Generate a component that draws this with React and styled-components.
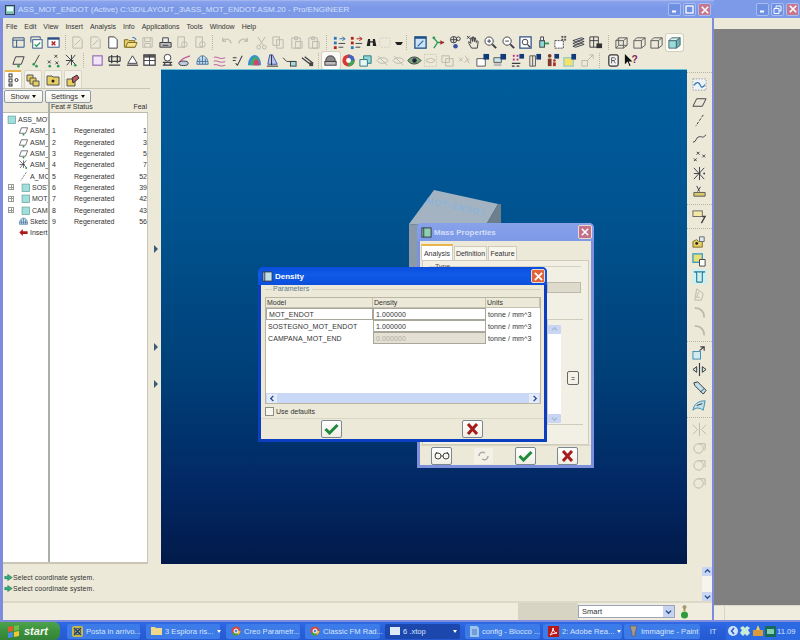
import React from "react";
import styled, { createGlobalStyle } from "styled-components";

const Global = createGlobalStyle`
  html, body { margin: 0; padding: 0; background: #245edb; }
  * { box-sizing: border-box; }
  body { font-family: "Liberation Sans", Arial, sans-serif; font-size: 7px; color: #222; }
`;

const CREAM = "#ece9d8";

const Desktop = styled.div`
  position: relative;
  width: 800px;
  height: 640px;
  overflow: hidden;
  display: grid;
  grid-template-columns: 714px 86px;
  grid-template-rows: 622px 18px;
`;

/* ---------- main window ---------- */
const Window = styled.div`
  display: flex;
  flex-direction: column;
  background: ${CREAM};
  border: solid #7f8bdc;
  border-width: 0 2px 2px 3px;
  min-width: 0;
`;
const TitleBar = styled.div`
  height: 18px;
  margin-left: -3px;
  margin-right: -2px;
  padding: 0 3px 0 5px;
  display: flex;
  align-items: center;
  gap: 2px;
  color: #d5e0fa;
  font-size: 8px;
  background: linear-gradient(#8aa4ec, #7b98e8 40%, #7d9ae8);
  border-top: 1px solid #a2b4f0;
`;
const TitleText = styled.span`
  flex: 1;
  white-space: nowrap;
  margin-left: 1px;
`;
const CapBtn = styled.span`
  width: 13px;
  height: 13px;
  border-radius: 2px;
  border: 1px solid #a8bcf0;
  background: ${(p) => (p.$close ? "#c7768f" : "#6f90e2")};
  display: flex;
  align-items: center;
  justify-content: center;
  svg { display: block; }
`;
const MenuBar = styled.div`
  height: 16px;
  display: flex;
  align-items: center;
  gap: 7px;
  padding-left: 3px;
  font-size: 7px;
  color: #333;
`;
const Tools = styled.div`
  height: 35px;
  display: flex;
  flex-direction: column;
  flex: none;
`;
const ToolRow = styled.div`
  height: 17.5px;
  display: flex;
  align-items: center;
  padding-left: ${(p) => p.$pad}px;
`;
const Slot = styled.span`
  flex: none;
  width: ${(p) => p.$w || 17.5}px;
  height: 17px;
  display: flex;
  align-items: center;
  justify-content: center;
  background: ${(p) => (p.$on ? "#fbfaf4" : "transparent")};
  border-radius: 2px;
  box-shadow: ${(p) => (p.$on ? "0 0 0 1px #d3d0c0" : "none")};
  svg { display: block; opacity: ${(p) => (p.$faded ? 0.28 : 1)}; }
`;
const Sep = styled.span`
  flex: none;
  width: ${(p) => p.$w}px;
  height: 15px;
  display: flex;
  justify-content: center;
  &::after { content: ""; width: 1px; height: 100%; border-left: 1px dotted #b5b2a2; }
`;
const Caret = styled.span`
  flex: none;
  width: 8px;
  height: 3px;
  border: 2px solid transparent;
  border-top: 3px solid #222;
  border-left-width: 2px;
  margin-top: 3px;
  background: none;
  transform: translateX(1px);
`;

const Body = styled.div`
  height: 495px;
  display: flex;
  flex: none;
`;

/* left navigator */
const Panel = styled.div`
  width: 147px;
  display: flex;
  flex-direction: column;
`;
const NavTabs = styled.div`
  height: 19px;
  display: flex;
  gap: 2px;
  padding: 1px 0 0 1px;
`;
const NavTab = styled.span`
  width: 18px;
  height: 18px;
  background: ${(p) => (p.$on ? "#fff" : "#f4f2e8")};
  border: 1px solid #d8d5c6;
  border-bottom: 0;
  border-top: ${(p) => (p.$on ? "2px solid #e9b54a" : "1px solid #d8d5c6")};
  border-radius: 2px 2px 0 0;
  display: flex;
  align-items: center;
  justify-content: center;
`;
const ShowRow = styled.div`
  height: 15px;
  display: flex;
  gap: 2px;
  padding-left: 1px;
  border-top: 1px solid #c9c6b6;
  align-items: center;
`;
const DropBtn = styled.span`
  width: ${(p) => p.$w}px;
  height: 13px;
  border: 1px solid #8f9aa8;
  border-radius: 2px;
  background: linear-gradient(#fff, #f1efe6);
  display: flex;
  align-items: center;
  justify-content: center;
  gap: 3px;
  font-size: 7.5px;
  color: #333;
  &::after { content: ""; border: 2.5px solid transparent; border-top: 3px solid #111; margin-top: 3px; }
`;
const TreeWrap = styled.div`
  flex: 1;
  display: grid;
  grid-template-columns: 47px 98px;
  grid-template-rows: 10px 1fr;
  margin-right: 2px;
  background: #fff;
  border-bottom: 2px solid #c9c6b6;
  border-right: 1px solid #c9c6b6;
  min-height: 0;
`;
const HeadCell = styled.div`
  background: ${CREAM};
  border-bottom: 1px solid #bdbaaa;
  font-size: 7px;
  display: flex;
  color: #333;
  padding: 0 1px;
  justify-content: space-between;
`;
const HeadBlank = styled.div`
  background: ${CREAM};
  border-bottom: 1px solid #bdbaaa;
  border-right: 2px solid #a9b0a8;
`;
const TreeCol = styled.div`
  border-right: 2px solid #a9b0a8;
  padding-top: 1px;
  overflow: hidden;
`;
const TreeRow = styled.div`
  height: 11.3px;
  display: flex;
  align-items: center;
  gap: 1px;
  padding-left: ${(p) => p.$in}px;
  white-space: nowrap;
  font-size: 7px;
  color: #333;
  svg { flex: none; }
`;
const Plus = styled.span`
  flex: none;
  width: 6px;
  height: 6px;
  margin-right: 5px;
  border: 1px solid #999;
  background: linear-gradient(#999, #999) center/4px 1px no-repeat, linear-gradient(#999, #999) center/1px 4px no-repeat;
`;
const FeatCol = styled.div`
  padding-top: 12.3px;
`;
const FeatRow = styled.div`
  height: 11.3px;
  display: grid;
  grid-template-columns: 22px 1fr 16px;
  align-items: center;
  padding-left: 2px;
  font-size: 7px;
  color: #333;
  & > :last-child { text-align: right; padding-right: 1px; overflow: hidden; }
`;
const Sash = styled.div`
  width: 11px;
  display: flex;
  flex-direction: column;
  align-items: center;
  padding-top: 176px;
`;
const SashMark = styled.svg`
  flex: none;
  margin-top: ${(p) => p.$mt}px;
`;

/* graphics area */
const Viewport = styled.div`
  position: relative;
  width: 526px;
  background: linear-gradient(#005c9b 0%, #00538f 30%, #003f78 62%, #022763 85%, #021a4a 100%);
  border-top: 1px solid #6cc0d8;
`;
const Cube = styled.svg`
  position: absolute;
  left: 240px;
  top: 116px;
`;
const RightBar = styled.div`
  width: 25px;
  display: flex;
  flex-direction: column;
  align-items: center;
  ${Slot} { height: 17.8px; }
`;
const RightSep = styled.span`
  width: 100%;
  flex: none;
  height: ${(p) => p.$h}px;
  display: flex;
  align-items: center;
  &::after { content: ""; width: 100%; border-top: 1px dotted #b5b2a2; }
`;

/* bottom area */
const Messages = styled.div`
  height: 39px;
  flex: none;
  display: flex;
  justify-content: space-between;
  padding: 8px 0 0 1px;
  border-bottom: 2px solid #dcd9c8;
`;
const MsgList = styled.div`
  display: flex;
  flex-direction: column;
  gap: 1px;
`;
const Msg = styled.div`
  height: 10px;
  display: flex;
  align-items: center;
  font-size: 6.9px;
  color: #333;
  letter-spacing: 0.1px;
`;
const MsgScroll = styled.div`
  width: 10px;
  margin: -5px 0 0 0;
  background: #f5f4ee;
  display: flex;
  flex-direction: column;
  justify-content: space-between;
`;
const ScrollBtn = styled.span`
  height: 9px;
  background: #c8d6f4;
  display: flex;
  align-items: center;
  justify-content: center;
  border-radius: 1px;
`;
const StatusBar = styled.div`
  flex: 1;
  display: flex;
  align-items: center;
  background: #f0edde;
`;
const StatusGap = styled.div`
  width: ${(p) => p.$w}px;
  height: 100%;
  flex: none;
  background: ${(p) => p.$bg || "transparent"};
  display: flex;
  align-items: center;
  justify-content: center;
`;
const SelectBox = styled.div`
  width: 97px;
  height: 13px;
  flex: none;
  border: 1px solid #9aa3b8;
  background: #fff;
  display: flex;
  align-items: center;
  justify-content: space-between;
  padding-left: 3px;
  font-size: 7.5px;
  color: #333;
`;
const SelectArrow = styled.span`
  width: 11px;
  height: 11px;
  background: #c6d4f2;
  display: flex;
  align-items: center;
  justify-content: center;
`;

/* window behind */
const BackWindow = styled.div`
  display: flex;
  flex-direction: column;
  background: ${CREAM};
  border-bottom: 2px solid #7f8bdc;
`;
const BackTitle = styled.div`
  height: 18px;
  display: flex;
  justify-content: flex-end;
  align-items: center;
  gap: 2px;
  padding-right: 1px;
  background: #7d9ae8;
`;
const BackMenu = styled.div`
  height: 11px;
`;
const BackGray = styled.div`
  flex: 1;
  background: #808080;
`;
const BackFoot = styled.div`
  height: 15px;
  border-top: 1px solid #dcd9c8;
  background: #f0edde linear-gradient(#d8d5c4, #d8d5c4) 10px 0/1px 100% no-repeat;
`;

/* taskbar */
const Taskbar = styled.div`
  grid-column: 1 / 3;
  display: flex;
  align-items: center;
  background: linear-gradient(#2f6ae4, #2a62dc 30%, #245ad2);
`;
const Start = styled.div`
  width: 60px;
  height: 18px;
  flex: none;
  margin-right: 7px;
  display: flex;
  align-items: center;
  gap: 3px;
  padding-left: 7px;
  border-radius: 0 6px 6px 0;
  background: linear-gradient(#4da34c, #3c913f 50%, #348236);
  color: #f4f8ee;
  font: italic bold 11px "Liberation Sans", sans-serif;
`;
const TaskBtn = styled.div`
  width: ${(p) => p.$w}px;
  height: 15px;
  flex: none;
  margin-right: ${(p) => p.$gap}px;
  display: flex;
  align-items: center;
  gap: 3px;
  padding-left: 5px;
  border-radius: 2px;
  background: ${(p) => (p.$on ? "#1c48ae" : "#3d7be8")};
  color: #d9e5fb;
  font-size: 7.6px;
  white-space: nowrap;
  position: relative;
  svg { flex: none; }
`;
const TaskCaret = styled.span`
  margin-left: auto;
  margin-right: 3px;
  border: 2px solid transparent;
  border-top: 3px solid #fff;
  margin-top: 3px;
`;
const Lang = styled.span`
  width: 26px;
  flex: none;
  text-align: center;
  color: #d9e5fb;
  font-size: 7.6px;
`;
const Tray = styled.div`
  flex: 1;
  height: 100%;
  display: flex;
  align-items: center;
  gap: 1px;
  padding-left: 2px;
  background: #2b6ae2;
  color: #d9e5fb;
  font-size: 7.6px;
`;
const Clock = styled.span`
  margin-left: auto;
  margin-right: 5px;
`;

/* dialogs */
const Dialog = styled.div`
  position: absolute;
  left: ${(p) => p.$x}px;
  top: ${(p) => p.$y}px;
  width: ${(p) => p.$w}px;
  height: ${(p) => p.$h}px;
  background: ${CREAM};
  border: 3px solid ${(p) => p.$edge};
  border-top: 0;
  border-radius: 5px 5px 0 0;
  display: flex;
  flex-direction: column;
`;
const DlgTitle = styled.div`
  flex: none;
  height: 18px;
  margin: 0 -3px;
  padding: 0 2px 0 4px;
  border-radius: 5px 5px 0 0;
  display: flex;
  align-items: center;
  gap: 2px;
  background: ${(p) => p.$bg};
  color: ${(p) => p.$fg};
  font-size: 8px;
  font-weight: bold;
`;
const DlgName = styled.span`
  flex: 1;
`;
const DlgClose = styled.span`
  width: 14px;
  height: 14px;
  border: 1px solid #f1d9c8;
  border-radius: 2px;
  background: ${(p) => p.$bg};
  display: flex;
  align-items: center;
  justify-content: center;
`;
const Fieldset = styled.div`
  flex: none;
  margin: 4px 4px 0;
  height: 6px;
  border-top: 1px solid #d4d1c0;
  font-size: 7px;
  color: #5d7a90;
  line-height: 8px;
  padding-left: 7px;
`;
const Legend = styled.span`
  position: relative;
  top: -5px;
  background: ${CREAM};
  padding: 0 3px 0 1px;
`;
const GridBox = styled.div`
  flex: none;
  margin: 2px 3px 0 4px;
  height: 107px;
  background: #fff;
  border: 1px solid #b8b5a5;
  display: flex;
  flex-direction: column;
`;
const GridRows = styled.div`
  flex: 1;
  display: grid;
  grid-template-columns: 107px 113px 1fr;
  grid-template-rows: 10px;
  grid-auto-rows: 12px;
  font-size: 7px;
  color: #333;
  align-content: start;
`;
const GridHead = styled.div`
  height: 10px;
  background: ${CREAM};
  border-right: 1px solid #c5c2b2;
  border-bottom: 1px solid #c5c2b2;
  padding-left: 1px;
  line-height: 9px;
`;
const Cell = styled.div`
  display: flex;
  align-items: center;
  padding-left: 2px;
  letter-spacing: 0.1px;
  white-space: nowrap;
  height: 12px;
  border: ${(p) => (p.$box ? "1px solid #a9a69a" : "0")};
  background: ${(p) => (p.$off ? "#e4e1d4" : "#fff")};
  color: ${(p) => (p.$off ? "#b0aea4" : "#333")};
`;
const HScroll = styled.div`
  flex: none;
  height: 10px;
  background: #c9d8f6;
  display: flex;
  justify-content: space-between;
  align-items: center;
  padding: 0 1px;
`;
const HArrow = styled.span`
  width: 10px;
  height: 9px;
  background: #e4ecfb;
  display: flex;
  align-items: center;
  justify-content: center;
`;
const CheckRow = styled.label`
  flex: none;
  height: 14px;
  margin-left: 4px;
  display: flex;
  align-items: center;
  gap: 2px;
  font-size: 7px;
  color: #333;
`;
const CheckBox = styled.span`
  width: 9px;
  height: 9px;
  background: #f7f6ef;
  border: 1px solid #8d8d84;
`;
const DlgFoot = styled.div`
  flex: 1;
  display: flex;
  align-items: center;
  justify-content: ${(p) => p.$just};
  border-top: 1px solid #d9d6c5;
  padding: ${(p) => p.$pad};
  gap: ${(p) => p.$gap || 0}px;
`;
const PushBtn = styled.span`
  width: 21px;
  height: 18px;
  flex: none;
  border: 1px solid ${(p) => (p.$flat ? "#ece9d8" : "#7d8790")};
  border-radius: 2px;
  background: ${(p) => (p.$flat ? "#f3f1e6" : "linear-gradient(#fff, #f0eee4)")};
  display: flex;
  align-items: center;
  justify-content: center;
`;
const MassTabs = styled.div`
  flex: none;
  display: flex;
  padding-left: 1px;
  height: 16px;
  margin-top: 3px;
  align-items: flex-end;
  gap: 1px;
`;
const MassTab = styled.span`
  height: ${(p) => (p.$on ? 16 : 14)}px;
  width: ${(p) => p.$w}px;
  background: ${(p) => (p.$on ? "#fff" : "#f7f5ec")};
  border: 1px solid #cfccbc;
  border-bottom: 0;
  border-top: ${(p) => (p.$on ? "2px solid #e9b54a" : "1px solid #cfccbc")};
  display: flex;
  align-items: center;
  justify-content: center;
  font-size: 7px;
  color: #333;
`;
const MassPanel = styled.div`
  flex: none;
  height: 185px;
  margin: 0 2px;
  border: 1px solid #cfccbc;
  padding: 5px 7px 0 6px;
  display: flex;
  flex-direction: column;
  background: #f2f0e4;
`;
const TypeLabel = styled.div`
  font-size: 7px;
  color: #555;
  padding-left: 6px;
  height: 16px;
  border-top: 1px solid #d4d1c0;
  line-height: 0;
`;
const TypeField = styled.div`
  height: 11px;
  margin-left: 118px;
  background: #dedbcd;
  border: 1px solid #bdbaa9;
`;
const ResultBox = styled.div`
  margin-top: 26px;
  height: 106px;
  margin-left: 118px;
  display: flex;
  gap: 6px;
  border: 1px solid #cfccbc;
  border-right: 0;
  padding: 5px 0 0;
  margin-right: -2px;
`;
const ResultList = styled.div`
  width: 13px;
  height: 98px;
  background: #fff;
  display: flex;
  flex-direction: column;
  justify-content: space-between;
`;
const SideCalc = styled.span`
  width: 12px;
  height: 14px;
  margin-top: 46px;
  border: 1px solid #666;
  border-radius: 2px;
  background: #f4f2e8;
  display: flex;
  align-items: center;
  justify-content: center;
  font-size: 7px;
`;

/* ---------- icons ---------- */
const K = "#3c3c44";
const B = "#2f74b8";
const Y = "#e7cf62";
const G = "#2a9a55";
const R = "#b32222";
const C = "#8fd6d8";

const lines = (d, c = K, w = 1) => <path d={d} fill="none" stroke={c} strokeWidth={w} />;
const dots = (pts, c = G) => pts.map(([x, y], i) => <circle key={i} cx={x} cy={y} r="1.4" fill={c} />);

const ICONS = {
  win: <>{lines("M2 3h12v10H2zM2 5.5h12M6 5.5V13", "#2b4f84")}</>,
  winCheck: <><rect x="4" y="5" width="10" height="9" fill="#fff" stroke="#2b4f84" />{lines("M2 8V2h10v2", "#2b4f84")}{lines("M6 10l2 2 4-4", G, 1.4)}</>,
  winX: <><rect x="2" y="3" width="12" height="10" fill="#fff" stroke="#2b4f84" /><path d="M2 3h12v2H2z" fill="#2b4f84" />{lines("M6 7l4 4M10 7l-4 4", R, 1.5)}</>,
  pencilDoc: <>{lines("M3 2h7l3 3v9H3zM5 11l6-6")}</>,
  page: <><path d="M4 2h6l3 3v9H4z" fill="#fff" stroke={K} /></>,
  open: <><path d="M1.5 13V5h4l1 1h6v7z" fill={Y} stroke="#7c6a25" /><path d="M3 13l2-5h10l-2 5z" fill="#f4e08a" stroke="#7c6a25" />{lines("M10 3c2-1 3 0 4 2", B, 1.2)}</>,
  save: <>{lines("M3 3h10v10H3zM5 3v4h6V3M5 13v-4h6v4")}</>,
  print: <><path d="M2 8h12v5H2z" fill="#bbb" stroke={K} /><path d="M5 3h6v5H5z" fill="#eee" stroke={K} />{lines("M5 11h6")}</>,
  magDoc: <>{lines("M3 2h7v11H3z")}<circle cx="10" cy="10" r="3" fill="none" stroke={K} /></>,
  undo: <>{lines("M4 6c3-3 8-2 9 3M4 3v3.5h3.5", K, 1.2)}</>,
  redo: <>{lines("M12 6C9 3 4 4 3 9M12 3v3.5H8.5", K, 1.2)}</>,
  cut: <>{lines("M4 2l6 9M12 2L6 11")}<circle cx="5" cy="13" r="2" fill="none" stroke={K} /><circle cx="11" cy="13" r="2" fill="none" stroke={K} /></>,
  copy: <>{lines("M2 2h7v9H2zM6 5h7v9H6z")}</>,
  paste: <>{lines("M3 3h9v11H3zM6 2h3v3H6zM7 7h7v7H7z")}</>,
  relA: <><g fill={B}><rect x="2" y="2" width="3" height="3" /><rect x="2" y="7" width="3" height="3" /></g><rect x="2" y="12" width="3" height="3" fill={R} /><path d="M8 4h6M11 2l3 2-3 2" stroke={B} fill="none" />{lines("M7 9h7M7 13h5")}</>,
  relB: <><g fill={R}><rect x="2" y="2" width="3" height="3" /><rect x="2" y="7" width="3" height="3" /></g><rect x="2" y="12" width="3" height="3" fill={B} /><path d="M8 4h6M11 2l3 2-3 2" stroke={R} fill="none" />{lines("M7 9h7M7 13h5")}</>,
  binoc: <path d="M3 3h3v3h4V3h3l2 10h-5V8H6v5H1z" fill="#222" />,
  dashBox: <rect x="2" y="3" width="11" height="10" rx="2" fill="none" stroke="#888" strokeDasharray="2 1.5" />,
  repaint: <><rect x="2" y="2" width="12" height="12" fill="#cfe2f4" stroke="#1d4f86" strokeWidth="1.4" /><path d="M2 2h12v2H2z" fill="#1d4f86" />{lines("M5 12l6-6", B, 1.4)}</>,
  spin: <>{lines("M3 3l4 5-4 6M7 8h7", "#2a9a55", 1.4)}<path d="M10 5.5l4 2.5-4 2.5z" fill={R} /><circle cx="3" cy="3" r="1.5" fill={G} /></>,
  orient: <><circle cx="6" cy="5" r="3.4" fill="none" stroke={K} /><circle cx="11" cy="4" r="2" fill="none" stroke={K} /><circle cx="8" cy="12" r="2.4" fill="#3a50a8" />{lines("M3 5h6M6 2v6")}</>,
  hand: <>{lines("M6 14L3 9V7l2 2V3l1 0 1 4V2l1 0 1 5V3l1 0 1 5 1-2 1 1-1 7z")}{lines("M1 1l3 3M4 1L1 4", K)}</>,
  zoomIn: <><circle cx="6.5" cy="6.5" r="4.4" fill="#fff" stroke={K} />{lines("M10 10l4 4", K, 2)}{lines("M4.5 6.5h4M6.5 4.5v4", K)}</>,
  zoomOut: <><circle cx="6.5" cy="6.5" r="4.4" fill="#fff" stroke={K} />{lines("M10 10l4 4", K, 2)}{lines("M4.5 6.5h4", K)}</>,
  zoomFit: <><rect x="2" y="2" width="12" height="12" fill="#fff" stroke="#2b4f84" strokeWidth="1.3" /><circle cx="7.5" cy="7.5" r="3" fill="none" stroke={K} />{lines("M10 10l3 3", K, 1.5)}</>,
  model: <><rect x="4" y="6" width="5" height="7" fill={C} stroke={K} /><path d="M9 9h5" stroke={G} strokeWidth="2" /><path d="M5 2h3v4H5z" fill="#fff" stroke={K} /></>,
  dotsBox: <><path d="M2 6h9v8H2z" fill="#fff" stroke={K} strokeDasharray="2 1" /><g fill="#555"><rect x="9" y="1" width="2" height="2" /><rect x="12" y="1" width="2" height="2" /><rect x="9" y="4" width="2" height="2" /><rect x="12" y="4" width="2" height="2" /></g></>,
  layers: <><path d="M2 6l9-3 3 1-9 3z" fill="#dbe7f2" stroke={K} /><path d="M2 9l9-3 3 1-9 3zM2 12l9-3 3 1-9 3z" fill="none" stroke={K} /></>,
  savedV: <>{lines("M2 2h9v11H2zM2 6h9M6 2v11")}<rect x="9" y="9" width="6" height="5" fill="#333" /></>,
  wire: <><path d="M2 6h8v8H2zM5 3h9v8M2 6l3-3M10 6l4-3M10 14l4-3M5 3v8h9M2 14l3-3" fill="none" stroke="#5c5c5c" /></>,
  hidden: <><path d="M2 6h8v8H2zM2 6l3-3h9v8l-4 3M10 6l4-3" fill="none" stroke="#5c5c5c" /></>,
  shaded: <><path d="M2 6h8v8H2z" fill="#9bdbd8" stroke="#4a6a70" /><path d="M2 6l3-3h9l-4 3z" fill="#d2f1ef" stroke="#4a6a70" /><path d="M10 6l4-3v8l-4 3z" fill="#6ab5b8" stroke="#4a6a70" /></>,
  plane: <><path d="M5 4h9l-3 8H2z" fill="none" stroke={K} />{dots([[8, 14]])}</>,
  axis: <>{lines("M11 2L5 13", K)}{dots([[8, 14], [5, 12]])}</>,
  point: <>{lines("M2 8l3 3M5 8l-3 3M9 2l3 3M12 2L9 5M10 9l3 3M13 9l-3 3", K)}{dots([[4, 14], [13, 14]])}</>,
  csys: <>{lines("M2 2l11 11M12 2L3 13M8 2v11M2 8h8", K)}{dots([[12, 13]])}</>,
  purple: <rect x="3" y="3" width="10" height="10" fill="#f0e6f6" stroke="#9a70b8" strokeWidth="1.3" />,
  xsec: <>{lines("M2 4h12M2 9h12M2 4v5M14 4v5M5 2v9M11 2v9M2 13h12", K, 1.3)}</>,
  tri: <><path d="M8 3l5 8H3z" fill="#fff" stroke={K} />{lines("M2 13h12", K, 1.3)}</>,
  tbl: <><rect x="2" y="2" width="12" height="11" fill="#fff" stroke={K} strokeWidth="1.3" /><path d="M2 2h12v3H2z" fill="#555" />{lines("M2 8h12M8 2v11", K)}</>,
  person: <><circle cx="8" cy="5" r="3.6" fill="#fff" stroke={K} />{lines("M3 10h10M3 13h10M5 10v3M11 10v3", K, 1.3)}</>,
  wavePink: <>{lines("M2 11c3-5 6-6 12-8", "#c05aa0", 1.4)}<ellipse cx="7" cy="11" rx="5" ry="2.4" fill="#bfc8dc" stroke={K} /></>,
  meshB: <><path d="M2 12c0-6 3-9 6-9s6 3 6 9z" fill="#bfe0ea" stroke="#5070a0" />{lines("M5 12V6M8 12V3M11 12V6M2 9h12", "#5070a0")}</>,
  wavePk: <>{lines("M2 5c3-3 5 3 12 0M2 9c3-3 5 3 12 0M2 13c3-3 5 3 12 0", "#c06aa8", 1.1)}</>,
  checkR: <>{lines("M3 5h4M3 8h3M6 11l2 2 5-10", K, 1.1)}</>,
  rainbow: <><path d="M1 13c0-7 4-11 7-11 4 0 7 5 7 11z" fill="#3a8ed8" /><path d="M4 13c0-6 3-9 5-9 3 0 4 4 4 9z" fill="#40b060" /><path d="M7 13c0-4 1-6 3-6 2 0 3 3 3 6z" fill="#d84070" /></>,
  flag: <><path d="M5 2h3l5 10H3z" fill="#b9c8ee" stroke="#3a50a8" />{lines("M7 2v11M2 14h12", "#222")}</>,
  dotRow: <>{lines("M1 5l4 4h9", K)}<rect x="9" y="9" width="6" height="5" fill="#a6d8d8" stroke={K} /></>,
  dotRow2: <>{lines("M2 5l9 7M5 4l9 7", K, 1.3)}<rect x="10" y="10" width="4" height="4" fill="#444" /></>,
  lockAct: <><path d="M3 12V8c0-3 2-5 5-5s5 2 5 5v4z" fill="#888" stroke={K} /><rect x="2" y="9" width="12" height="4" fill="#bbb" stroke={K} /></>,
  wheel: <><circle cx="8" cy="8" r="6.5" fill="#d63a32" /><path d="M8 8V1.5A6.5 6.5 0 0 1 14.5 8z" fill="#3a66c8" /><path d="M8 8h6.5A6.5 6.5 0 0 1 8 14.5z" fill="#3aa856" /><circle cx="8" cy="8" r="2.6" fill="#fff" /></>,
  cubeG: <><path d="M6 3h8v8H6z" fill="#8fd6d8" stroke="#2b7a80" /><path d="M2 7h8v7H2z" fill="#e8f6f6" stroke="#2b7a80" /></>,
  eyeX: <>{lines("M2 8c3-4 9-4 12 0-3 4-9 4-12 0z", K)}{lines("M3 3l10 10", K)}</>,
  eyeG: <><path d="M1 8c3-5 10-5 14 0-4 5-11 5-14 0z" fill="#79a974" stroke={K} /><circle cx="8" cy="8" r="2.4" fill="#224" /></>,
  eyeBox: <><rect x="1.5" y="1.5" width="13" height="13" fill="none" stroke="#666" strokeDasharray="1.5 1.5" />{lines("M3 8c3-3 7-3 10 0-3 3-7 3-10 0z", K)}</>,
  dup: <>{lines("M2 3h8v7H2zM6 6h8v8H6z", K)}</>,
  star: <>{lines("M2 5l4 4M6 5L2 9M9 3l4 8M13 6l-5 4", K)}</>,
  badgeA: <><path d="M2 6h9v8H2z" fill="#fff" stroke="#555" /><path d="M9 1h6v6H9z" fill="#123a78" /></>,
  badgeB: <><path d="M2 5h8v5H2z" fill="#cde4ec" stroke="#555" /><path d="M2 11h8v3H2z" fill="#bbb" /><path d="M9 1h6v6H9z" fill="#123a78" /></>,
  badgeC: <><g fill="#b0307a"><rect x="3" y="2" width="2" height="2" /><rect x="7" y="2" width="2" height="2" /><rect x="3" y="6" width="2" height="2" /><rect x="7" y="6" width="2" height="2" /></g><path d="M10 1h5v5h-5z" fill="#123a78" />{lines("M2 11h9M2 14h3M7 14h3", K, 1.3)}</>,
  badgeD: <>{lines("M3 3h6v11H3zM6 3v11", "#555")}<path d="M10 1h5v6h-5z" fill="#123a78" /></>,
  badgeE: <><circle cx="5" cy="3" r="2" fill="#7c3a2a" /><path d="M3 6h4v8H3z" fill="#7c3a2a" /><circle cx="10" cy="8" r="1.4" fill="#b03030" /><path d="M8.5 10h3v4h-3z" fill="#b03030" /><path d="M10 1h5v5h-5z" fill="#123a78" /></>,
  badgeF: <><rect x="2" y="5" width="10" height="9" fill="#f2e36a" stroke="#9cc" strokeWidth="1.4" /><path d="M10 1h5v6h-5z" fill="#123a78" /></>,
  fadedBox: <>{lines("M2 8h6v6H2zM8 8l6-6M10 2h4v4", K)}</>,
  docR: <><rect x="3" y="2" width="10" height="12" rx="2" fill="#f2f2f2" stroke="#333" strokeWidth="1.3" />{lines("M6 11V5h3l1 1v1l-1 1H6M8 8l2 3", "#555")}</>,
  help: <><path d="M2 1l0 11 3-3 2 5 1-1-2-4h4z" fill="#111" /><text x="9" y="11" fontSize="11" fontWeight="bold" fill="#8a1e5c" fontFamily="Liberation Sans">?</text></>,
  curveDash: <><rect x="1" y="2" width="14" height="12" fill="#eef3f6" stroke="#999" strokeDasharray="1.5 1.5" />{lines("M2 9c3-5 6-3 7 0s3 2 5-1", B, 1.3)}</>,
  planeR: <path d="M5 4h10l-4 8H1z" fill="none" stroke={K} />,
  axisR: <path d="M12 2L4 14" fill="none" stroke={K} strokeDasharray="3 1.5" />,
  curve: <path d="M1 12c4 0 3-6 7-6s3 2 7-2" fill="none" stroke={K} />,
  ptR: <>{lines("M5 3l3 3M8 3L5 6M11 6l3 3M14 6l-3 3M2 10l3 3M5 10l-3 3", K)}</>,
  csysR: <>{lines("M2 2l11 12M13 2L2 14M8 1v14M2 8h7", K)}<circle cx="13" cy="8" r="1" fill={K} /></>,
  note: <>{lines("M5 2l3 6M9 3L6 8", K)}<path d="M2 9h12v4H2z" fill="#d8c96a" stroke="#555" /></>,
  box7: <><rect x="1" y="2" width="10" height="6" fill="#f2e9a8" stroke="#666" />{lines("M11 8h3l-4 7", K, 1.4)}</>,
  folderOp: <><path d="M1 8l4-2 2 2h4v6H1z" fill={Y} stroke="#7c6a25" /><path d="M8 3h5v5H8z" fill="#dbe9f6" stroke="#666" /><circle cx="5" cy="10" r="1.5" fill="#222" /></>,
  merge: <><rect x="1" y="2" width="10" height="9" fill="#e9e07a" stroke="#3a9ac0" strokeWidth="1.4" /><path d="M8 8h6v7H8z" fill="#fff" stroke="#444" /></>,
  hole: <><path d="M0 0h16v16H0z" fill="#cdf0f0" /><path d="M2 3c3 0 3 1 3 3v8M14 3c-3 0-3 1-3 3v8M2 3h12M5 14h6" fill="none" stroke="#2a7a98" strokeWidth="1.2" /></>,
  shell: <>{lines("M5 2l7 5-2 7H3zM7 5l-2 6h3", K)}</>,
  bend: <>{lines("M3 3c6 0 10 4 10 10", K, 2)}</>,
  copyBox: <><rect x="1" y="7" width="8" height="8" fill="#d2ecf4" stroke="#3a8ab0" />{lines("M8 6l5-4M9 2h4v4", K, 1.2)}</>,
  mirror: <><path d="M1 8l4-3v6zM15 8l-4-3v6z" fill="#c3e6ea" stroke="#333" />{lines("M8 1v14", K, 1.2)}</>,
  diag: <><path d="M2 3l4-1 9 9-3 4-9-9z" fill="#bfe0ea" stroke="#333" />{lines("M9 13l4-4", K)}</>,
  wrap: <><path d="M1 13c1-6 5-10 13-10l-2 10c-4-3-8-3-11 0z" fill="#bfe0ea" stroke="#3a8ab0" />{lines("M5 8l6-2", "#333")}</>,
  miniMirror: <>{lines("M8 1v14M1 3l5 5-5 5M15 3l-5 5 5 5", K)}</>,
  round: <><circle cx="7" cy="9" r="5" fill="none" stroke={K} />{lines("M7 4h7v7", K)}</>,
  cubeTree: <rect x="3" y="3" width="11" height="11" fill="#9fe0dc" stroke="#6a9a9a" />,
  insert: <path d="M2 8l5-5v3h7v4H7v3z" fill="#b01818" />,
};

const Icon = ({ name, size = 15 }) => (
  <svg width={size} height={size} viewBox="0 0 16 16">{ICONS[name]}</svg>
);

const ROW1 = [
  ["win"], ["winCheck"], ["winX"], "s6.5",
  ["pencilDoc", 1], ["pencilDoc", 1], ["page"], ["open"], ["save", 1], ["print"], ["magDoc", 1], ["magDoc", 1], "s8.5",
  ["undo", 1], ["redo", 1], ["cut", 1], ["copy", 1], ["paste", 1], ["paste", 1], "s8", ["relA"], ["relB"], ["binoc", 0, 11], ["dashBox", 1], "c", "s10",
  ["repaint"], ["spin"], ["orient"], ["hand"], ["zoomIn"], ["zoomOut"], ["zoomFit"], ["model"], ["dotsBox"], ["layers"], ["savedV"], "s8.5",
  ["wire"], ["hidden"], ["hidden"], ["shaded", 0, 17.5, 1],
];
const ROW2 = [
  ["plane"], ["axis"], ["point"], ["csys"], "s8.5",
  ["purple"], ["xsec"], ["tri"], ["tbl"], ["person"], ["wavePink"], ["meshB"], ["wavePk"], ["checkR"], ["rainbow"], ["flag"], ["dotRow"], ["dotRow2"], "s6",
  ["lockAct", 0, 17.5, 1], ["wheel"], ["cubeG"], ["eyeX", 1, 16], ["eyeX", 1, 16], ["eyeG", 0, 16], ["eyeBox", 1, 16.5], ["dup", 1, 17], ["star", 1], ["badgeA"], ["badgeB"], ["badgeC"], ["badgeD"], ["badgeE"], ["badgeF"], ["fadedBox", 1], "s8.5",
  ["docR"], ["help"],
];

const ToolStrip = ({ items, pad }) => (
  <ToolRow $pad={pad}>
    {items.map((it, i) => {
      if (it === "c") return <Caret key={i} />;
      if (typeof it === "string") return <Sep key={i} $w={Number(it.slice(1))} />;
      return (
        <Slot key={i} $faded={it[1]} $w={it[2]} $on={it[3]}>
          <Icon name={it[0]} />
        </Slot>
      );
    })}
  </ToolRow>
);

const TREE = [
  { text: "ASS_MOT", icon: "cubeTree", pad: 3 },
  { text: "ASM_", icon: "plane", pad: 15 },
  { text: "ASM_", icon: "plane", pad: 15 },
  { text: "ASM_", icon: "plane", pad: 15 },
  { text: "ASM_", icon: "csys", pad: 15 },
  { text: "A_MC", icon: "axisR", pad: 15 },
  { text: "SOST", icon: "cubeTree", pad: 5, plus: 1 },
  { text: "MOT_", icon: "cubeTree", pad: 5, plus: 1 },
  { text: "CAMF", icon: "cubeTree", pad: 5, plus: 1 },
  { text: "Sketc", icon: "meshB", pad: 15 },
  { text: "Insert", icon: "insert", pad: 15 },
];

const FEATS = [
  [1, 1], [2, 3], [3, 5], [4, 7], [5, 52], [6, 39], [7, 42], [8, 43], [9, 56],
];

const RIGHT = [
  7, ["curveDash"], ["planeR"], ["axisR"], ["curve"], ["ptR"], ["csysR"], ["note"], 7,
  ["box7"], 7,
  ["folderOp"], ["merge"], ["hole"], ["shell", 1], ["bend", 1], ["bend", 1], 4,
  ["copyBox"], ["mirror"], ["diag"], ["wrap"], 6,
  ["miniMirror", 1], ["round", 1], ["round", 1], ["round", 1],
];

const SmallX = ({ c = "#fff", s = 9, w = 2 }) => (
  <svg width={s} height={s} viewBox="0 0 10 10"><path d="M1 1l8 8M9 1L1 9" stroke={c} strokeWidth={w} /></svg>
);
const Arrow = ({ d, c = "#2a4a8c" }) => (
  <svg width="7" height="7" viewBox="0 0 8 8"><path d={d} fill="none" stroke={c} strokeWidth="1.6" /></svg>
);
const BigCheck = () => (
  <svg width="15" height="12" viewBox="0 0 15 12"><path d="M1.5 6l4 4 8-8" fill="none" stroke="#1e8a3a" strokeWidth="3" /></svg>
);
const BigX = () => (
  <svg width="13" height="12" viewBox="0 0 13 12"><path d="M2 1l9 10M11 1L2 11" fill="none" stroke="#a51c1c" strokeWidth="3" /></svg>
);
const SashArrow = ({ mt }) => (
  <SashMark $mt={mt} width="4" height="8" viewBox="0 0 4 8"><path d="M0 0l4 4-4 4z" fill="#3a5a7a" /></SashMark>
);
const DlgIcon = ({ fill }) => (
  <svg width="11" height="11" viewBox="0 0 12 12"><rect x="1" y="1" width="10" height="10" fill={fill} stroke="#334" /><path d="M3 1v10" stroke="#334" /></svg>
);
const GreenArrow = () => (
  <svg width="9" height="9" viewBox="0 0 12 10"><path d="M1 3.5h4V1l6 4-6 4V6.500H1z" fill="#2fb070" stroke="#166" strokeWidth="0.7" /></svg>
);
const Chrome = () => (
  <svg width="10" height="10" viewBox="0 0 10 10"><circle cx="5" cy="5" r="4.5" fill="#d8483a" /><path d="M5 5L1 7.500A4.500 4.500 0 0 0 7 9z" fill="#3aa050" /><path d="M5 5l2 4A4.500 4.500 0 0 0 9.500 5z" fill="#e8c030" /><circle cx="5" cy="5" r="2" fill="#5a8ae0" stroke="#fff" /></svg>
);
const TASKS = [
  { w: 73, gap: 6, text: "Posta in arrivo...", icon: <svg width="11" height="11" viewBox="0 0 11 11"><rect width="11" height="11" rx="2" fill="#c8b848" /><path d="M2 2l7 7M9 2L2 9" stroke="#1d3a7a" strokeWidth="1.4" /><circle cx="5.500" cy="5.500" r="3" fill="none" stroke="#1d3a7a" /></svg> },
  { w: 74, gap: 6, text: "3 Esplora ris...", caret: 1, icon: <svg width="11" height="10" viewBox="0 0 11 10"><path d="M0 9V1h4l1 1h6v7z" fill="#efd88a" /></svg> },
  { w: 74, gap: 5, text: "Creo Parametr...", icon: <Chrome /> },
  { w: 75, gap: 5, text: "Classic FM Rad...", icon: <Chrome /> },
  { w: 75, gap: 5, text: "6 .xtop", on: 1, caret: 1, icon: <svg width="10" height="8" viewBox="0 0 10 8"><rect width="10" height="8" fill="#dfeaf8" /></svg> },
  { w: 75, gap: 3, text: "config - Blocco ...", icon: <svg width="9" height="11" viewBox="0 0 9 11"><path d="M0 0h7l2 2v9H0z" fill="#9cc4ee" /><path d="M2 4h5M2 6h5M2 8h5" stroke="#4a78b8" /></svg> },
  { w: 79, gap: 2, text: "2: Adobe Rea...", caret: 1, icon: <svg width="11" height="11" viewBox="0 0 11 11"><rect width="11" height="11" fill="#b81818" /><path d="M2 9c2-2 3-5 3-7 0 3 2 5 4 5-3 0-5 1-7 2z" fill="none" stroke="#fff" /></svg> },
  { w: 76, gap: 0, text: "Immagine - Paint", icon: <svg width="9" height="12" viewBox="0 0 9 12"><path d="M1 1h7L6 8v3H3V8z" fill="#a89a88" stroke="#556" strokeWidth="0.6" /></svg> },
];

export default function App() {
  return (
    <Desktop>
      <Global />
      <Window>
        <TitleBar>
          <svg width="10" height="10" viewBox="0 0 11 11"><rect x="0.500" y="0.500" width="10" height="10" fill="#7ec0a8" stroke="#335" /><rect x="2" y="2" width="7" height="5" fill="#dff" /></svg>
          <TitleText>ASS_MOT_ENDOT (Active) C:\3D\LAYOUT_3\ASS_MOT_ENDOT.ASM.20 - Pro/ENGINEER</TitleText>
          <CapBtn><svg width="7" height="7" viewBox="0 0 7 7"><path d="M1 5.500h4" stroke="#fff" strokeWidth="2" /></svg></CapBtn>
          <CapBtn><svg width="9" height="9" viewBox="0 0 9 9"><rect x="1" y="1" width="7" height="7" fill="none" stroke="#fff" strokeWidth="1.300" /></svg></CapBtn>
          <CapBtn $close><SmallX s={8} /></CapBtn>
        </TitleBar>
        <MenuBar>
          {["File", "Edit", "View", "Insert", "Analysis", "Info", "Applications", "Tools", "Window", "Help"].map((m) => (
            <span key={m}>{m}</span>
          ))}
        </MenuBar>
        <Tools>
          <ToolStrip items={ROW1} pad={7} />
          <ToolStrip items={ROW2} pad={7} />
        </Tools>
        <Body>
          <Panel>
            <NavTabs>
              <NavTab $on><svg width="13" height="14" viewBox="0 0 13 14"><g fill="none" stroke="#333"><rect x="2" y="1" width="3" height="3" /><rect x="2" y="6" width="3" height="3" /><rect x="2" y="11" width="3" height="2" /><circle cx="9.500" cy="7" r="1.500" /></g></svg></NavTab>
              <NavTab><svg width="14" height="14" viewBox="0 0 14 14"><path d="M1 2h6v6H1z" fill="#e7cf62" stroke="#555" /><path d="M4 5h6v6H4z" fill="#e7cf62" stroke="#555" /><path d="M7 8h6v5H7z" fill="#e7cf62" stroke="#555" /></svg></NavTab>
              <NavTab><svg width="14" height="14" viewBox="0 0 14 14"><path d="M1 12V3h5l1 1h6v8z" fill="#e7cf62" stroke="#555" /><circle cx="7" cy="8" r="1.500" fill="#222" /></svg></NavTab>
              <NavTab><svg width="14" height="14" viewBox="0 0 14 14"><path d="M1 13V6h8v7z" fill="#e7cf62" stroke="#555" /><path d="M6 5l5-3 2 3-6 5z" fill="#c05a5a" stroke="#333" /></svg></NavTab>
            </NavTabs>
            <ShowRow>
              <DropBtn $w={39}>Show</DropBtn>
              <DropBtn $w={46}>Settings</DropBtn>
            </ShowRow>
            <TreeWrap>
              <HeadBlank />
              <HeadCell><span>Feat # Status</span><span>Feal</span></HeadCell>
              <TreeCol>
                {TREE.map((t, i) => (
                  <TreeRow key={i} $in={t.pad}>
                    {t.plus && <Plus />}
                    <Icon name={t.icon} size={11} />
                    <span>{t.text}</span>
                  </TreeRow>
                ))}
              </TreeCol>
              <FeatCol>
                {FEATS.map(([n, v]) => (
                  <FeatRow key={n}>
                    <span>{n}</span>
                    <span>Regenerated</span>
                    <span>{v}</span>
                  </FeatRow>
                ))}
              </FeatCol>
            </TreeWrap>
          </Panel>
          <Sash>
            <SashArrow mt={0} />
            <SashArrow mt={90} />
            <SashArrow mt={29} />
          </Sash>
          <Viewport>
            <Cube width="100" height="90" viewBox="0 0 100 90">
              <path d="M33 4L97 18 82 44 8 38z" fill="#a3b3c2" />
              <path d="M97 18L82 44V90H100V18z" fill="#6d7e8c" />
              <path d="M8 38L82 44V90H8z" fill="#8a9aa8" />
              <text x="0" y="0" transform="translate(25 17) rotate(12)" fontSize="8" letterSpacing="1.5" fill="#7fb4e4" fontFamily="Liberation Sans">MOT-ENDOT</text>
            </Cube>
          </Viewport>
          <RightBar>
            {RIGHT.map((r, i) =>
              typeof r === "number" ? (
                <RightSep key={i} $h={r} />
              ) : (
                <Slot key={i} $faded={r[1]}><Icon name={r[0]} /></Slot>
              )
            )}
          </RightBar>
        </Body>
        <Messages>
          <MsgList>
            <Msg><GreenArrow />Select coordinate system.</Msg>
            <Msg><GreenArrow />Select coordinate system.</Msg>
          </MsgList>
          <MsgScroll>
            <ScrollBtn><Arrow d="M1 5l3-3 3 3" /></ScrollBtn>
            <ScrollBtn><Arrow d="M1 3l3 3 3-3" /></ScrollBtn>
          </MsgScroll>
        </Messages>
        <StatusBar>
          <StatusGap $w={515} />
          <StatusGap $w={60} $bg="#d8d4c4" />
          <SelectBox>Smart<SelectArrow><Arrow d="M1 3l3 3 3-3" /></SelectArrow></SelectBox>
          <StatusGap $w={18}>
            <svg width="9" height="14" viewBox="0 0 9 14"><circle cx="4.500" cy="10" r="3.500" fill="#2f9a3a" /><path d="M4.500 1v5" stroke="#b8a030" strokeWidth="2" /><circle cx="4.500" cy="2" r="1.500" fill="none" stroke="#888" /></svg>
          </StatusGap>
        </StatusBar>
      </Window>
      <BackWindow>
        <BackTitle>
          <CapBtn><svg width="7" height="7" viewBox="0 0 7 7"><path d="M1 5.500h4" stroke="#fff" strokeWidth="2" /></svg></CapBtn>
          <CapBtn><svg width="9" height="9" viewBox="0 0 9 9"><path d="M1 3.500h5v5H1zM3 3V1h5v5H6.500" fill="none" stroke="#fff" /></svg></CapBtn>
          <CapBtn $close><SmallX s={8} /></CapBtn>
        </BackTitle>
        <BackMenu />
        <BackGray />
        <BackFoot />
      </BackWindow>
      <Taskbar>
        <Start>
          <svg width="14" height="13" viewBox="0 0 14 13"><path d="M1 2l5-1v5l-5 1z" fill="#e8582a" /><path d="M7 1l5-1v5l-5 1z" fill="#6cc04a" /><path d="M1 8l5-1v5l-5 1z" fill="#4a8ae8" /><path d="M7 7l5-1v5l-5 1z" fill="#f2c830" /></svg>
          start
        </Start>
        {TASKS.map((t) => (
          <TaskBtn key={t.text} $w={t.w} $gap={t.gap} $on={t.on}>
            {t.icon}
            <span>{t.text}</span>
            {t.caret && <TaskCaret />}
          </TaskBtn>
        ))}
        <Lang>IT</Lang>
        <Tray>
          <svg width="10" height="10" viewBox="0 0 10 10"><circle cx="5" cy="5" r="5" fill="#cfe4fb" /><path d="M6 2L3.500 5 6 8" fill="none" stroke="#2a5ac8" strokeWidth="1.500" /></svg>
          <svg width="12" height="12" viewBox="0 0 12 12"><path d="M1 3l3-2 2 2 2-2 3 2-2 2 2 3-3 3-2-2-2 2-3-3 2-3z" fill="#c8ecd8" /></svg>
          <svg width="12" height="12" viewBox="0 0 12 12"><rect x="1" y="5" width="10" height="6" fill="#d89a3a" /><path d="M6 0l2 5H4z" fill="#e8d060" /></svg>
          <svg width="11" height="11" viewBox="0 0 11 11"><rect width="11" height="11" fill="#1a6a5a" /><rect x="2" y="3" width="7" height="5" fill="#7fd0b0" /></svg>
          <Clock>11.09</Clock>
        </Tray>
      </Taskbar>

      <Dialog $x={417} $y={223} $w={177} $h={245} $edge="#7c90dc">
        <DlgTitle $bg="linear-gradient(#88a2ea, #7d9ae8)" $fg="#d3def8">
          <DlgIcon fill="#8fd0b0" />
          <DlgName>Mass Properties</DlgName>
          <DlgClose $bg="#c2708c"><SmallX s={8} /></DlgClose>
        </DlgTitle>
        <MassTabs>
          <MassTab $on $w={32}>Analysis</MassTab>
          <MassTab $w={33}>Definition</MassTab>
          <MassTab $w={29}>Feature</MassTab>
        </MassTabs>
        <MassPanel>
          <TypeLabel>Type</TypeLabel>
          <TypeField />
          <ResultBox>
            <ResultList>
              <ScrollBtn><Arrow d="M1 5l3-3 3 3" c="#a9b8d0" /></ScrollBtn>
              <ScrollBtn><Arrow d="M1 3l3 3 3-3" c="#a9b8d0" /></ScrollBtn>
            </ResultList>
            <SideCalc>=</SideCalc>
          </ResultBox>
        </MassPanel>
        <DlgFoot $just="flex-start" $pad="0 0 0 11px" $gap={21}>
          <PushBtn><svg width="16" height="9" viewBox="0 0 16 9"><circle cx="4" cy="5" r="3" fill="none" stroke="#444" /><circle cx="12" cy="5" r="3" fill="none" stroke="#444" /><path d="M7 5h2M1 4l2-3M15 4l-2-3" stroke="#444" fill="none" /></svg></PushBtn>
          <PushBtn $flat><svg width="13" height="12" viewBox="0 0 13 12"><path d="M2 6c0-3 3-5 6-3M11 6c0 3-3 5-6 3" fill="none" stroke="#aaa" strokeWidth="1.500" /></svg></PushBtn>
          <PushBtn><BigCheck /></PushBtn>
          <PushBtn><BigX /></PushBtn>
        </DlgFoot>
      </Dialog>

      <Dialog $x={258} $y={267} $w={289} $h={175} $edge="#0b3fc0">
        <DlgTitle $bg="linear-gradient(#0a4ddc, #0f5ae8 40%, #0a50dc)" $fg="#fff">
          <DlgIcon fill="#bfe0e8" />
          <DlgName>Density</DlgName>
          <DlgClose $bg="#e0633a"><SmallX s={9} /></DlgClose>
        </DlgTitle>
        <Fieldset><Legend>Parameters</Legend></Fieldset>
        <GridBox>
          <GridRows>
            <GridHead>Model</GridHead>
            <GridHead>Density</GridHead>
            <GridHead>Units</GridHead>
            <Cell $box>MOT_ENDOT</Cell>
            <Cell $box>1.000000</Cell>
            <Cell>tonne / mm^3</Cell>
            <Cell>SOSTEGNO_MOT_ENDOT</Cell>
            <Cell $box>1.000000</Cell>
            <Cell>tonne / mm^3</Cell>
            <Cell>CAMPANA_MOT_END</Cell>
            <Cell $box $off>0.000000</Cell>
            <Cell>tonne / mm^3</Cell>
          </GridRows>
          <HScroll>
            <HArrow><Arrow d="M5 1L2 4l3 3" /></HArrow>
            <HArrow><Arrow d="M3 1l3 3-3 3" /></HArrow>
          </HScroll>
        </GridBox>
        <CheckRow><CheckBox />Use defaults</CheckRow>
        <DlgFoot $just="flex-start" $pad="0 0 0 60px" $gap={120}>
          <PushBtn><BigCheck /></PushBtn>
          <PushBtn><BigX /></PushBtn>
        </DlgFoot>
      </Dialog>
    </Desktop>
  );
}
